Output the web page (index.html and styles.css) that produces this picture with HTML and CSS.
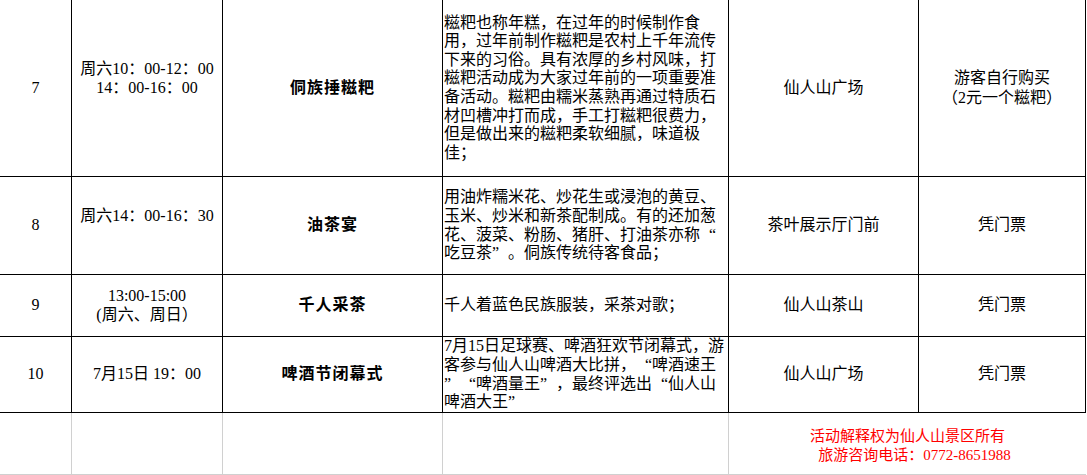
FILE: index.html
```html
<!DOCTYPE html>
<html lang="zh-CN">
<head>
<meta charset="utf-8">
<title>仙人山活动安排</title>
<link rel="stylesheet" href="styles.css">
</head>
<body>
<div class="sheet">
  <div class="c">7</div>
  <div class="c"><div class="t">周六10：00-12：00<br>14：00-16：00<br>&nbsp;</div></div>
  <div class="c title">侗族捶糍粑</div>
  <div class="c desc"><div class="t">糍粑也称年糕，在过年的时候制作食<br>用，过年前制作糍粑是农村上千年流传<br>下来的习俗。具有浓厚的乡村风味，打<br>糍粑活动成为大家过年前的一项重要准<br>备活动。糍粑由糯米蒸熟再通过特质石<br>材凹槽冲打而成，手工打糍粑很费力，<br>但是做出来的糍粑柔软细腻，味道极<br>佳；</div></div>
  <div class="c">仙人山广场</div>
  <div class="c"><div class="t tall">游客自行购买<br>（2元一个糍粑）</div></div>

  <div class="c">8</div>
  <div class="c"><div class="t">周六14：00-16：30<br>&nbsp;</div></div>
  <div class="c title">油茶宴</div>
  <div class="c desc"><div class="t">用油炸糯米花、炒花生或浸泡的黄豆、<br>玉米、炒米和新茶配制成。有的还加葱<br>花、菠菜、粉肠、猪肝、打油茶亦称<span class="ql">“</span><br>吃豆茶<span class="qr">”</span>。侗族传统待客食品；</div></div>
  <div class="c">茶叶展示厅门前</div>
  <div class="c">凭门票</div>

  <div class="c">9</div>
  <div class="c"><div class="t">13:00-15:00<br>(周六、周日）</div></div>
  <div class="c title">千人采茶</div>
  <div class="c desc"><div class="t">千人着蓝色民族服装，采茶对歌；</div></div>
  <div class="c">仙人山茶山</div>
  <div class="c">凭门票</div>

  <div class="c">10</div>
  <div class="c">7月15日 19：00</div>
  <div class="c title">啤酒节闭幕式</div>
  <div class="c desc"><div class="t">7月15日足球赛、啤酒狂欢节闭幕式，游<br>客参与仙人山啤酒大比拼，<span class="ql">“</span>啤酒速王<br><span class="qr">”</span><span class="ql">“</span>啤酒量王<span class="qr">”</span>，最终评选出<span class="ql">“</span>仙人山<br>啤酒大王<span class="qr">”</span></div></div>
  <div class="c">仙人山广场</div>
  <div class="c">凭门票</div>

  <div class="c foot"></div>
  <div class="c foot"></div>
  <div class="c foot"></div>
  <div class="c foot"></div>
  <div class="c foot note"><div class="t">活动解释权为仙人山景区所有<br><span class="shift">旅游咨询电话：0772-8651988</span></div></div>
</div>
</body>
</html>
```

FILE: styles.css
```css
html, body {
  margin: 0;
  padding: 0;
  background: #ffffff;
}

body {
  font-family: "Liberation Serif", "Noto Sans CJK SC", serif;
  font-size: 16px;
  color: #000000;
}

.sheet {
  display: grid;
  grid-template-columns: 72px 151px 220px 286px 190px 167px;
  grid-template-rows: 177px 98px 62px 76px 62px;
  width: 1086px;
}

.c {
  box-sizing: border-box;
  border-right: 1px solid #000000;
  border-bottom: 1px solid #000000;
  display: flex;
  align-items: center;
  justify-content: center;
  text-align: center;
  white-space: nowrap;
  overflow: hidden;
  line-height: 18.6px;
}

.t {
  line-height: 18.6px;
}

.t.tall {
  line-height: 20px;
}

.title {
  font-weight: bold;
  letter-spacing: 1px;
}

.desc {
  justify-content: flex-start;
  text-align: left;
  padding-left: 1px;
}

.ql,
.qr {
  display: inline-block;
  width: 16px;
}

.ql {
  text-align: right;
}

.qr {
  text-align: left;
}

.foot {
  border-right-color: #d0d0d0;
  border-bottom-color: #d0d0d0;
}

.note {
  grid-column: span 2;
  border-right: none;
  color: #ff0000;
  font-size: 15px;
  padding-top: 4px;
}

.shift {
  padding-left: 14px;
}
```
